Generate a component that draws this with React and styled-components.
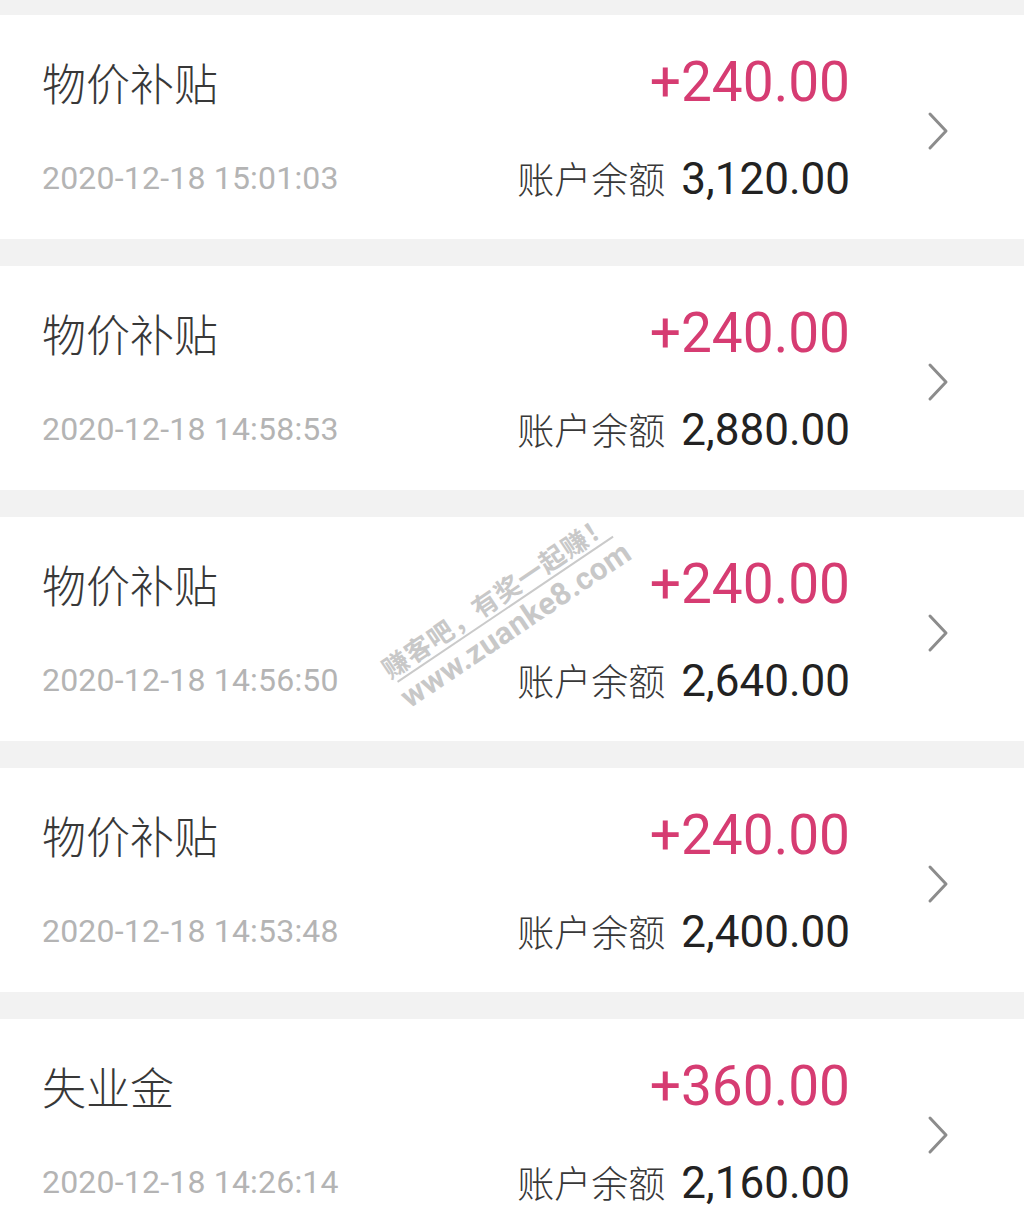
import React from "react";
import styled, { createGlobalStyle } from "styled-components";

const GlobalStyle = createGlobalStyle`
  html, body { margin: 0; padding: 0; background: #f2f2f2; }
  body { font-family: Roboto, "Noto Sans CJK SC", sans-serif; }
`;

const Page = styled.div`
  position: relative;
  width: 1024px;
  height: 1216px;
  overflow: hidden;
  background: #f2f2f2;
  padding-top: 15px;
  box-sizing: border-box;
`;

const List = styled.div`
  display: flex;
  flex-direction: column;
  gap: 27px;
`;

const Card = styled.div`
  flex: none;
  height: 224px;
  background: #ffffff;
  display: flex;
  align-items: flex-start;
  padding: 0 74px 0 42px;
  box-sizing: border-box;
`;

const Left = styled.div`
  flex: 1;
  display: flex;
  flex-direction: column;
  padding-top: 42px;
`;

const Title = styled.div`
  font-family: "Noto Sans CJK SC", sans-serif;
  font-size: 44px;
  font-weight: 300;
  line-height: 50px;
  color: #383838;
`;

const DateText = styled.div`
  margin-top: 51px;
  font-family: Roboto, sans-serif;
  font-size: 32px;
  line-height: 40px;
  color: #b4b4b4;
  letter-spacing: 0.2px;
`;

const Right = styled.div`
  display: flex;
  flex-direction: column;
  align-items: flex-end;
  padding-top: 37px;
`;

const Amount = styled.div`
  font-family: Roboto, sans-serif;
  font-size: 55px;
  line-height: 60px;
  color: #d63c72;
`;

const BalanceRow = styled.div`
  margin-top: 41px;
  display: flex;
  align-items: baseline;
  gap: 16px;
  line-height: 50px;
`;

const BalanceLabel = styled.span`
  font-family: "Noto Sans CJK SC", sans-serif;
  font-size: 37px;
  font-weight: 300;
  color: #383838;
`;

const BalanceValue = styled.span`
  font-family: Roboto, sans-serif;
  font-size: 44px;
  color: #222222;
`;

const Chevron = styled.svg`
  flex: none;
  margin-left: 76px;
  margin-top: 96px;
  width: 24px;
  height: 40px;
`;

const Watermark = styled.div`
  position: absolute;
  left: 506px;
  top: 610px;
  transform: translate(-50%, -50%) rotate(-34deg);
  display: flex;
  flex-direction: column;
  align-items: center;
  color: #c8c8c8;
  pointer-events: none;
  text-shadow: 0 0 2px #fff, 0 0 2px #fff;
  white-space: nowrap;
`;

const WmLine1 = styled.div`
  font-family: "Noto Sans CJK SC", sans-serif;
  font-size: 26px;
  line-height: 30px;
  font-weight: 700;
  letter-spacing: 1px;
`;

const WmRule = styled.div`
  width: 260px;
  height: 2px;
  background: #cacaca;
  margin: 1px 0 3px;
`;

const WmLine2 = styled.div`
  font-family: Roboto, sans-serif;
  font-size: 31px;
  line-height: 30px;
  font-weight: 700;
  letter-spacing: 0.5px;
`;

const items = [
  { title: "物价补贴", date: "2020-12-18 15:01:03", amount: "+240.00", balance: "3,120.00" },
  { title: "物价补贴", date: "2020-12-18 14:58:53", amount: "+240.00", balance: "2,880.00" },
  { title: "物价补贴", date: "2020-12-18 14:56:50", amount: "+240.00", balance: "2,640.00" },
  { title: "物价补贴", date: "2020-12-18 14:53:48", amount: "+240.00", balance: "2,400.00" },
  { title: "失业金", date: "2020-12-18 14:26:14", amount: "+360.00", balance: "2,160.00" },
];

export default function App() {
  return (
    <>
      <GlobalStyle />
      <Page>
        <List>
          {items.map((it, i) => (
            <Card key={i}>
              <Left>
                <Title>{it.title}</Title>
                <DateText>{it.date}</DateText>
              </Left>
              <Right>
                <Amount>{it.amount}</Amount>
                <BalanceRow>
                  <BalanceLabel>账户余额</BalanceLabel>
                  <BalanceValue>{it.balance}</BalanceValue>
                </BalanceRow>
              </Right>
              <Chevron viewBox="0 0 24 40">
                <polyline
                  points="4,3 20,20 4,37"
                  fill="none"
                  stroke="#8c8c8c"
                  strokeWidth="3"
                  strokeLinecap="round"
                  strokeLinejoin="round"
                />
              </Chevron>
            </Card>
          ))}
        </List>
        <Watermark>
          <WmLine1>赚客吧，有奖一起赚！</WmLine1>
          <WmRule />
          <WmLine2>www.zuanke8.com</WmLine2>
        </Watermark>
      </Page>
    </>
  );
}
